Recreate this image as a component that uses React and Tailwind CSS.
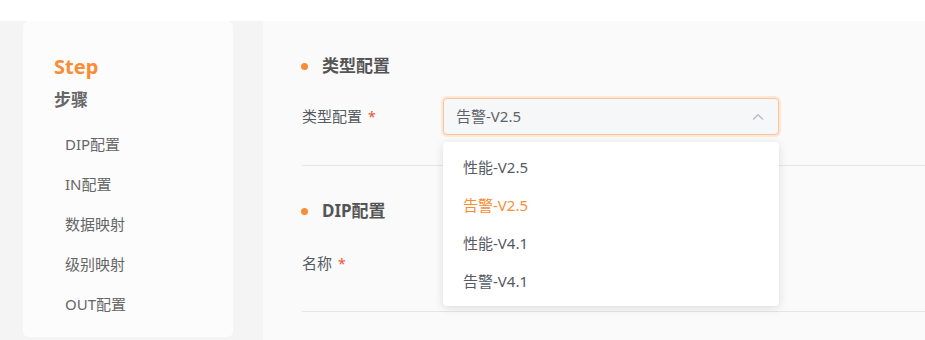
import React from "react";

const font = { fontFamily: '"Microsoft YaHei", "Noto Sans", "Noto Sans CJK SC", sans-serif' };

function ChevronUp() {
  return (
    <svg width="14" height="14" viewBox="0 0 14 14" fill="none">
      <path d="M2.5 9 L7 4.8 L11.5 9" stroke="#b8bcc4" strokeWidth="1.4" strokeLinecap="round" strokeLinejoin="round" />
    </svg>
  );
}

function SectionTitle({ children }) {
  return (
    <div className="flex items-center h-[24px]">
      <span className="w-[7px] h-[7px] rounded-full bg-[#fa8c35]" />
      <span className="ml-[14px] text-[17px] font-bold text-[#555555]">{children}</span>
    </div>
  );
}

function Label({ children }) {
  return (
    <div className="w-[141px] flex items-center text-[15px] text-[#555a63]">
      <span>{children}</span>
      <span className="ml-[6px] text-[#f0532f] text-[14px]">*</span>
    </div>
  );
}

export default function App() {
  const options = ["性能-V2.5", "告警-V2.5", "性能-V4.1", "告警-V4.1"];
  return (
    <div className="w-[925px] h-[340px] bg-white overflow-hidden relative" style={font}>
      <div className="h-[21px] bg-white" />
      <div className="flex h-[319px] bg-[#f4f4f4] pl-[23px]">
        <div className="w-[210px] h-[316px] bg-[#fcfcfc] rounded-[6px] pt-[33px] pl-[31px]">
          <div className="text-[20px] leading-[26px] font-bold text-[#fa8c35]">Step</div>
          <div className="text-[17px] leading-[22px] font-bold text-[#666666] mt-[9px]">步骤</div>
          <div className="mt-[13px] pl-[11px] flex flex-col">
            {["DIP配置", "IN配置", "数据映射", "级别映射", "OUT配置"].map((t) => (
              <div key={t} className="h-[40px] flex items-center text-[15px] text-[#666666]">{t}</div>
            ))}
          </div>
        </div>
        <div className="ml-[30px] flex-1 bg-[#fafafa] pl-[38px] pt-[33px]">
          <SectionTitle>类型配置</SectionTitle>
          <div className="flex items-center mt-[20px]">
            <div className="ml-[1px]"><Label>类型配置</Label></div>
            <div className="w-[336px] h-[37px] rounded-[4px] border border-[#fbc49a] ring-2 ring-[#fde7d6] bg-[#f6f7f9] flex items-center justify-between pl-[12px] pr-[13px]">
              <span className="text-[15px] text-[#606266]">告警-V2.5</span>
              <ChevronUp />
            </div>
          </div>
          <div className="mt-[30px] ml-[1px] h-px bg-[#e6e6e6]" />
          <div className="mt-[33px]">
            <SectionTitle>DIP配置</SectionTitle>
          </div>
          <div className="flex items-center mt-[30px] h-[20px] ml-[1px]">
            <Label>名称</Label>
          </div>
          <div className="mt-[38px] ml-[1px] h-px bg-[#e6e6e6]" />
        </div>
      </div>
      <div className="absolute left-[443px] top-[142px] w-[336px] bg-white rounded-[4px] shadow-[0_2px_10px_rgba(0,0,0,0.12)] py-[6px]">
        {options.map((o, i) => (
          <div
            key={o}
            className={"h-[38px] flex items-center pl-[20px] text-[15px] " + (i === 1 ? "text-[#fa8c35]" : "text-[#555a63]")}
          >
            {o}
          </div>
        ))}
      </div>
    </div>
  );
}
